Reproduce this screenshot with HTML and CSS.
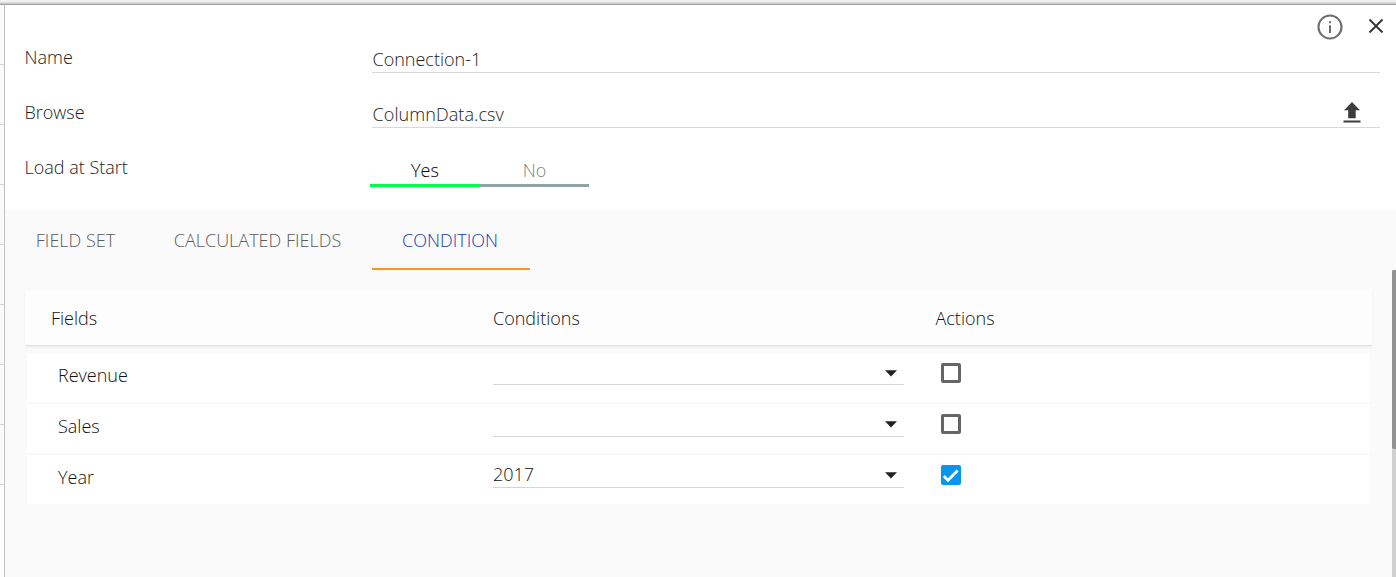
FILE: index.html
```html
<!DOCTYPE html>
<html lang="en">
<head>
<meta charset="utf-8">
<title>Connection</title>
<link rel="stylesheet" href="styles.css">
</head>
<body>
<div class="topbar"></div>
<div class="shell">
  <div class="rail"><i></i><i></i><i></i><i></i><i></i><i></i><i></i><i></i></div>
  <main class="panel">
    <section class="form">
      <div class="row">
        <span class="label">Name</span>
        <div class="input"><span>Connection-1</span></div>
      </div>
      <div class="row">
        <span class="label">Browse</span>
        <div class="input"><span class="file">ColumnData.csv</span>
          <svg class="upload" width="18" height="22" viewBox="0 0 18 22"><path d="M9 1 17 9.3h-4.3v8H5.2v-8H1z M.5 19.4h17v2.2H.5z" fill="#3c3c3c"/></svg>
        </div>
      </div>
      <div class="row">
        <span class="label">Load at Start</span>
        <div class="toggle"><span class="on">Yes</span><span>No</span></div>
      </div>
      <div class="tools">
        <svg width="26" height="26" viewBox="0 0 26 26"><circle cx="13" cy="13" r="11.5" fill="none" stroke="#6e6e6e" stroke-width="2.1"/><path d="M12 7.2h2v2.1h-2zM12 11.2h2v7.8h-2z" fill="#6e6e6e"/></svg>
        <svg width="16" height="16" viewBox="0 0 16 16"><path d="M1.5 1.5l13 13M14.5 1.5l-13 13" stroke="#333" stroke-width="1.8" fill="none"/></svg>
      </div>
    </section>
    <section class="details">
      <nav class="tabs">
        <span class="tab tab-fields">FIELD SET</span>
        <span class="tab tab-calc">CALCULATED FIELDS</span>
        <span class="tab tab-cond active">CONDITION</span>
      </nav>
      <div class="thead"><span>Fields</span><span>Conditions</span><span>Actions</span></div>
      <div class="tbody">
        <div class="trow first"><span class="name">Revenue</span><div class="select"><span></span><svg width="12" height="7" viewBox="0 0 12 7"><path d="M0 .2h12L6 6.4z" fill="#222"/></svg></div><span class="check"></span></div>
        <div class="trow"><span class="name">Sales</span><div class="select"><span></span><svg width="12" height="7" viewBox="0 0 12 7"><path d="M0 .2h12L6 6.4z" fill="#222"/></svg></div><span class="check"></span></div>
        <div class="trow"><span class="name">Year</span><div class="select"><span>2017</span><svg width="12" height="7" viewBox="0 0 12 7"><path d="M0 .2h12L6 6.4z" fill="#222"/></svg></div><span class="check checked"><svg width="20" height="20" viewBox="0 0 20 20"><path d="M2.8 11l4.2 4.2L16.6 5.4" fill="none" stroke="#fff" stroke-width="2.8"/></svg></span></div>
      </div>
      <div class="scroll"><div class="thumb"></div></div>
    </section>
  </main>
</div>
</body>
</html>
```
FILE: styles.css
```css
* { box-sizing: border-box; }
body {
  margin: 0;
  height: 577px;
  overflow: hidden;
  display: flex;
  flex-direction: column;
  background: #fff;
  color: #222;
  font: 300 18px/24px "Open Sans", "Noto Sans", sans-serif;
}
svg { display: block; flex: none; }
.topbar { height: 5px; flex: none; background: linear-gradient(#f0f0f0 0 2px, #dedede 2px 3px, #c8c8c8 3px 4px, #a3a3a3 4px 5px); }
.shell { flex: 1; display: flex; min-height: 0; }
.rail { width: 4px; display: flex; flex-direction: column; }
.rail i { height: 60px; background: #fafafa; border-bottom: 1px solid #d6d6d6; }
.panel { flex: 1; border-left: 1px solid #c2c2c2; display: flex; flex-direction: column; }
.form { position: relative; height: 205px; padding: 33px 16px 0 19.5px; }
.row { height: 55px; display: flex; }
.label { width: 347.5px; padding-top: 7px; }
.input { flex: 1; height: 35px; padding: 9px 0 0 .5px; border-bottom: 1px solid #d8d8d8; display: flex; justify-content: space-between; }
.file { letter-spacing: .08px; }
.upload { margin: -1px 19px 0 0; }
.toggle { display: flex; width: 219px; height: 39px; margin: 0 0 0 -2px; color: #808080; text-align: center; }
.toggle span { flex: 1; padding-top: 10px; border-bottom: 3px solid #92a3a3; }
.toggle .on { flex: 0 0 110px; color: #000; border-color: #00ff48; }
.tools { position: absolute; top: 9px; right: 12px; display: flex; gap: 25px; align-items: center; }
.tools svg:last-child { margin-top: -2px; }
.details { position: relative; flex: 1; background: #fafafa; padding-left: 20px; }
.tabs { display: flex; height: 60px; margin-bottom: 20px; color: #5c5c5c; }
.tab { padding-top: 18px; white-space: nowrap; text-align: center; }
.tab-fields { width: 101px; }
.tab-calc { width: 246px; padding-left: 17px; }
.tab-cond { width: 158px; }
.active { color: #2537a8; border-bottom: 2px solid #fb9326; padding-right: 2px; }
.thead { width: 1347px; height: 56px; padding: 16px 0 0 26px; display: grid; grid-template-columns: 442px 442.5px auto; background: #fdfdfd; border-bottom: 1px solid #e0e0e0; box-shadow: 0 1px 2px #00000010; color: #111; }
.tbody { width: 1343px; margin: 7px 0 0 2px; display: flex; flex-direction: column; gap: 2px; }
.trow { height: 49px; display: flex; background: #fff; padding-left: 31px; color: #111; box-shadow: 0 0 1px #0000000a; }
.name { width: 435px; padding-top: 10px; }
.select { width: 411px; height: 33px; padding: 7px 7px 0 0; border-bottom: 1px solid #d5d5d5; display: flex; justify-content: space-between; }
.first .select { height: 32px; }
.select svg { margin-top: 10px; }
.check { width: 20px; height: 20px; margin: 10px 0 0 37px; border: 3px solid #666; border-radius: 2px; }
.checked { border: 0; background: #0795ee; }
.scroll { position: absolute; top: 60px; right: 0; bottom: 0; width: 4px; background: #d0d0d0; }
.thumb { height: 179px; background: #929292; border-radius: 2px 0 0 2px; }
```
